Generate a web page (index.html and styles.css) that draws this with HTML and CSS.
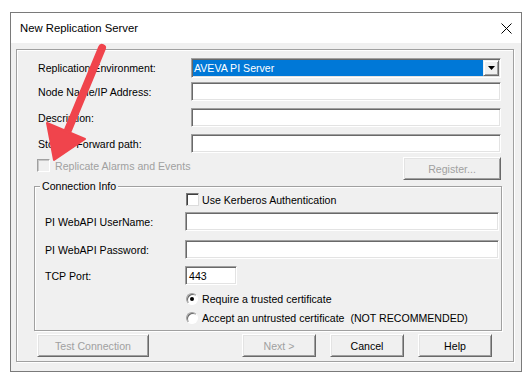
FILE: index.html
```html
<!DOCTYPE html>
<html lang="en">
<head>
    <meta charset="UTF-8">
    <meta name="viewport" content="width=device-width, initial-scale=1.0">
    <title>New Replication Server</title>
    <link rel="stylesheet" href="styles.css">
</head>
<body>
    <div class="dialog">
        <div class="titlebar">
            <span class="title">New Replication Server</span>
            <svg class="close" width="11" height="11" viewBox="0 0 11 11">
                <path d="M0.5 0.5 L10.5 10.5 M10.5 0.5 L0.5 10.5" stroke="#000" stroke-width="1" fill="none"/>
            </svg>
        </div>

        <div class="client">
            <div class="frame">
                <div class="field-row">
                    <span class="label">Replication Environment:</span>
                    <div class="combo">
                        <span class="combo-value">AVEVA PI Server</span>
                        <span class="combo-btn">
                            <svg width="7" height="4" viewBox="0 0 7 4"><path d="M0 0 H7 L3.5 4 Z" fill="#000"/></svg>
                        </span>
                    </div>
                </div>
                <div class="field-row gap-small">
                    <span class="label">Node Name/IP Address:</span>
                    <div class="textbox"></div>
                </div>
                <div class="field-row">
                    <span class="label">Description:</span>
                    <div class="textbox"></div>
                </div>
                <div class="field-row">
                    <span class="label">Store &amp; Forward path:</span>
                    <div class="textbox"></div>
                </div>

                <div class="check-row">
                    <span class="check-item disabled">
                        <span class="checkbox"></span>
                        <span>Replicate Alarms and Events</span>
                    </span>
                    <span class="button disabled register">Register...</span>
                </div>

                <div class="group">
                    <span class="group-title">Connection Info</span>
                    <div class="group-row kerberos">
                        <span class="group-label"></span>
                        <span class="check-item">
                            <span class="checkbox"></span>
                            <span>Use Kerberos Authentication</span>
                        </span>
                    </div>
                    <div class="group-row username">
                        <span class="group-label">PI WebAPI UserName:</span>
                        <div class="textbox wide"></div>
                    </div>
                    <div class="group-row password">
                        <span class="group-label">PI WebAPI Password:</span>
                        <div class="textbox wide"></div>
                    </div>
                    <div class="group-row port">
                        <span class="group-label">TCP Port:</span>
                        <div class="textbox small">443</div>
                    </div>
                    <div class="group-row radio-first">
                        <span class="group-label"></span>
                        <span class="radio-item">
                            <span class="radio checked"></span>
                            <span>Require a trusted certificate</span>
                        </span>
                    </div>
                    <div class="group-row radio-second">
                        <span class="group-label"></span>
                        <span class="radio-item">
                            <span class="radio"></span>
                            <span>Accept an untrusted certificate&nbsp; (NOT RECOMMENDED)</span>
                        </span>
                    </div>
                </div>

                <div class="buttons">
                    <span class="button disabled test">Test Connection</span>
                    <div class="button-group">
                        <span class="button disabled">Next &gt;</span>
                        <span class="button">Cancel</span>
                        <span class="button">Help</span>
                    </div>
                </div>
            </div>
        </div>
    </div>

    <!-- red callout arrow drawn over the dialog -->
    <svg class="arrow" width="530" height="382" viewBox="0 0 530 382">
        <line x1="102" y1="48" x2="68" y2="130" stroke="#f0444c" stroke-width="8" stroke-linecap="round"/>
        <polygon points="54,160 47,123 85,139" fill="#f0444c" stroke="#f0444c" stroke-width="2" stroke-linejoin="round"/>
    </svg>
</body>
</html>
```

FILE: styles.css
```css
/* Reset */
body, span, div {
    margin: 0;
    padding: 0;
    box-sizing: border-box;
}

body {
    font-family: "Liberation Sans", Arial, sans-serif;
    font-size: 10.6px;
    color: #000;
    background-color: #fff;
}

/* Window */
.dialog {
    margin: 12px 0 0 10px;
    width: 512px;
    height: 360px;
    border: 1px solid #7a7a7a;
    background-color: #f0f0f0;
    display: flex;
    flex-direction: column;
}

.titlebar {
    height: 30px;
    background-color: #fff;
    display: flex;
    align-items: center;
    justify-content: space-between;
    padding: 0 9px 0 9px;
}

.title {
    font-size: 11.3px;
}

.client {
    padding: 6px 0 0 5px;
}

.frame {
    width: 498px;
    height: 313px;
    border: 1px solid #a0a0a0;
    box-shadow: inset 1px 1px 0 #fff, 1px 1px 0 #fff;
    padding: 8px 12px 0 20px;
}

/* Top form rows */
.field-row {
    display: flex;
    align-items: center;
    margin-top: 7px;
}

.field-row:first-child {
    margin-top: 0;
}

.field-row.gap-small {
    margin-top: 4px;
}

.label {
    width: 154px;
    padding-left: 1px;
}

.textbox {
    width: 310px;
    height: 19px;
    background-color: #fff;
    border: 1px solid;
    border-color: #a0a0a0 #fff #fff #a0a0a0;
    box-shadow: inset 1px 1px 0 #696969, inset -1px -1px 0 #e3e3e3;
    padding: 3px 0 0 3px;
    line-height: 12px;
}

.textbox.wide {
    width: 314px;
}

.textbox.small {
    width: 52px;
}

.combo {
    width: 310px;
    height: 20px;
    display: flex;
    background-color: #fff;
    border: 1px solid;
    border-color: #a0a0a0 #fff #fff #a0a0a0;
    box-shadow: inset 1px 1px 0 #696969, inset -1px -1px 0 #e3e3e3;
    padding: 1px;
}

.combo-value {
    flex: 1;
    background-color: #0078d7;
    color: #fff;
    padding-left: 1px;
    line-height: 16px;
}

.combo-btn {
    width: 16px;
    height: 16px;
    background-color: #f0f0f0;
    border: 1px solid;
    border-color: #f0f0f0 #696969 #696969 #f0f0f0;
    box-shadow: inset 1px 1px 0 #fff, inset -1px -1px 0 #a0a0a0;
    display: flex;
    align-items: center;
    justify-content: center;
}

/* Checkbox row */
.check-row {
    margin-top: 4px;
    display: flex;
    justify-content: space-between;
    align-items: flex-start;
}

.check-item {
    display: flex;
    align-items: center;
    gap: 4px;
}

.check-row .check-item {
    margin-top: 2px;
    gap: 5px;
}

.checkbox {
    width: 13px;
    height: 13px;
    background-color: #fff;
    border: 1px solid;
    border-color: #7a7a7a #dcdcdc #dcdcdc #7a7a7a;
    box-shadow: inset 1px 1px 0 #404040;
}

.check-item.disabled {
    color: #a0a0a0;
}

.check-item.disabled .checkbox {
    background-color: #f0f0f0;
    border-color: #a0a0a0 #fff #fff #a0a0a0;
    box-shadow: inset 1px 1px 0 #c8c8c8;
}

/* Buttons */
.button {
    width: 74px;
    height: 23px;
    display: flex;
    align-items: center;
    justify-content: center;
    background-color: #f0f0f0;
    border: 1px solid;
    border-color: #fff #696969 #696969 #fff;
    box-shadow: inset 1px 1px 0 #e3e3e3, inset -1px -1px 0 #a0a0a0;
}

.button.disabled {
    color: #a0a0a0;
}

.button.register {
    width: 98px;
}

.button.test {
    width: 112px;
}

/* Connection Info group */
.group {
    position: relative;
    margin: 6px 0 0 -3px;
    width: 468px;
    height: 145px;
    border: 1px solid #a0a0a0;
    box-shadow: inset 1px 1px 0 #fff, 1px 1px 0 #fff;
    padding: 6px 0 0 10px;
}

.group-title {
    position: absolute;
    top: -7px;
    left: 5px;
    padding: 0 2px;
    line-height: 13px;
    background-color: #f0f0f0;
}

.group-row {
    display: flex;
    align-items: center;
}

.group-label {
    width: 140px;
}

.kerberos .check-item {
    margin-left: 1px;
    gap: 3px;
}

.username {
    margin-top: 6px;
}

.password {
    margin-top: 9px;
}

.port {
    margin-top: 7px;
}

.radio-first {
    margin-top: 7px;
    height: 14px;
}

.radio-second {
    margin-top: 5px;
    height: 14px;
}

.radio-item {
    margin-left: 1px;
    display: flex;
    align-items: center;
    gap: 4px;
}

.radio {
    position: relative;
    width: 12px;
    height: 12px;
    border-radius: 50%;
    background-color: #fff;
    border: 1px solid;
    border-color: #a0a0a0 #fff #fff #a0a0a0;
    box-shadow: inset 1px 1px 0 #696969;
}

.radio.checked::after {
    content: "";
    position: absolute;
    left: 3px;
    top: 3px;
    width: 4px;
    height: 4px;
    border-radius: 50%;
    background-color: #000;
}

/* Bottom buttons */
.buttons {
    margin-top: 3px;
    display: flex;
    justify-content: space-between;
    padding-right: 9px;
}

.button-group {
    display: flex;
    gap: 14px;
}

/* Callout arrow */
.arrow {
    position: absolute;
    left: 0;
    top: 0;
    pointer-events: none;
}
```
